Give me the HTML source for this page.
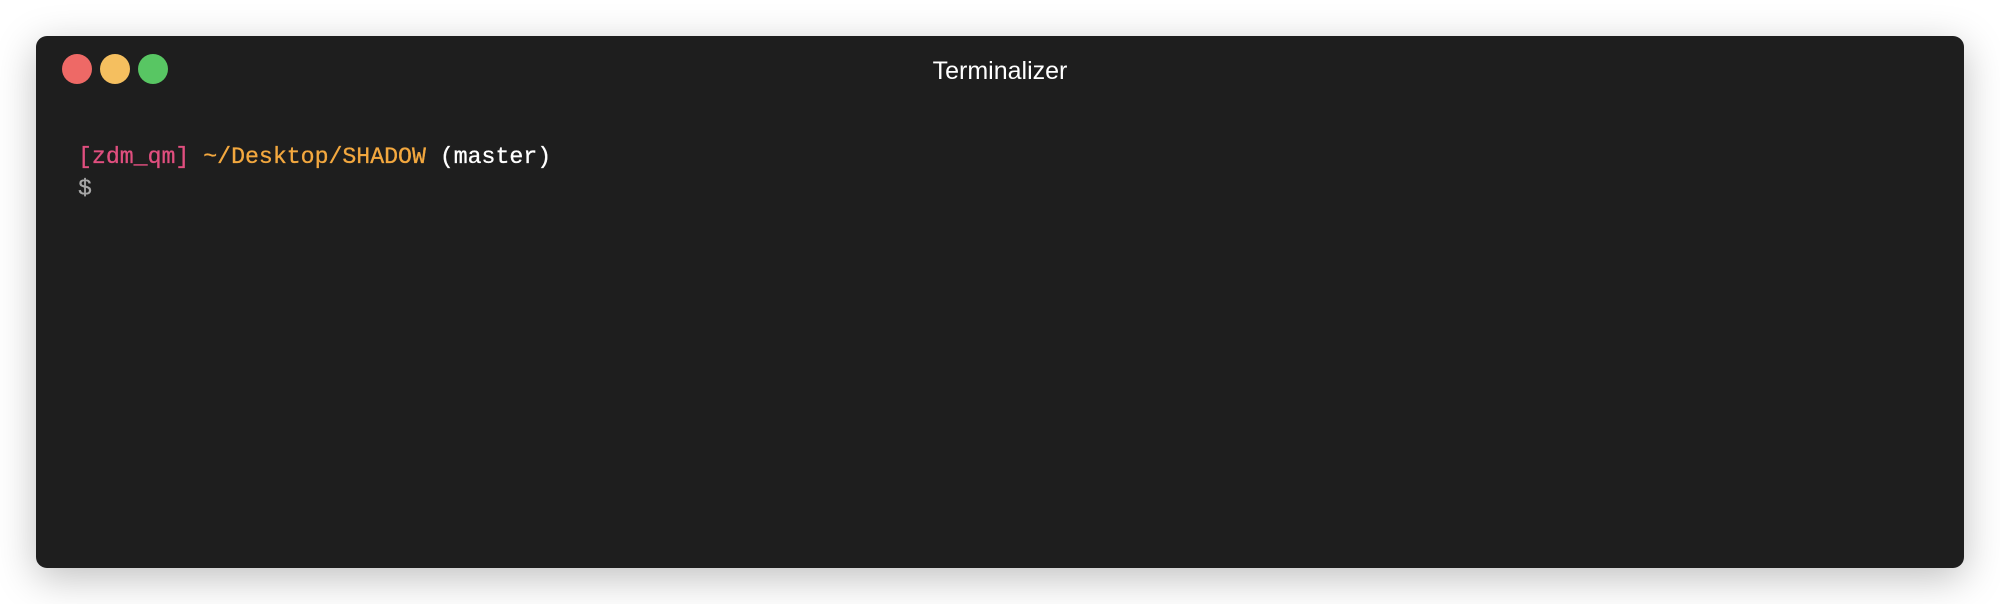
<!DOCTYPE html>
<html><head><style>
html,body{margin:0;padding:0;width:2000px;height:604px;background:#fff;overflow:hidden}
.win{position:absolute;left:36px;top:36px;width:1928px;height:532px;background:#1e1e1e;border-radius:11px;box-shadow:0 10px 40px rgba(0,0,0,0.25)}
.dot{position:absolute;top:54px;width:30px;height:30px;border-radius:50%}
.title{position:absolute;left:0;width:2000px;top:55px;text-align:center;font:25px/32px "Liberation Sans",sans-serif;color:#fff}
.term{position:absolute;left:78px;top:141px;font:23.2px/32px "Liberation Mono",monospace;white-space:pre;-webkit-text-stroke:0.3px currentColor}
</style></head><body>
<div class="win"></div>
<div class="dot" style="left:62px;background:#ee6966"></div>
<div class="dot" style="left:100px;background:#f5bf5f"></div>
<div class="dot" style="left:138px;background:#58c663"></div>
<div class="title">Terminalizer</div>
<div class="term"><span style="color:#e14f7f">[zdm_qm]</span> <span style="color:#f3a83f">~/Desktop/SHADOW</span> <span style="color:#fff">(master)</span>
<span style="color:#a8a8a8">$</span></div>
</body></html>
